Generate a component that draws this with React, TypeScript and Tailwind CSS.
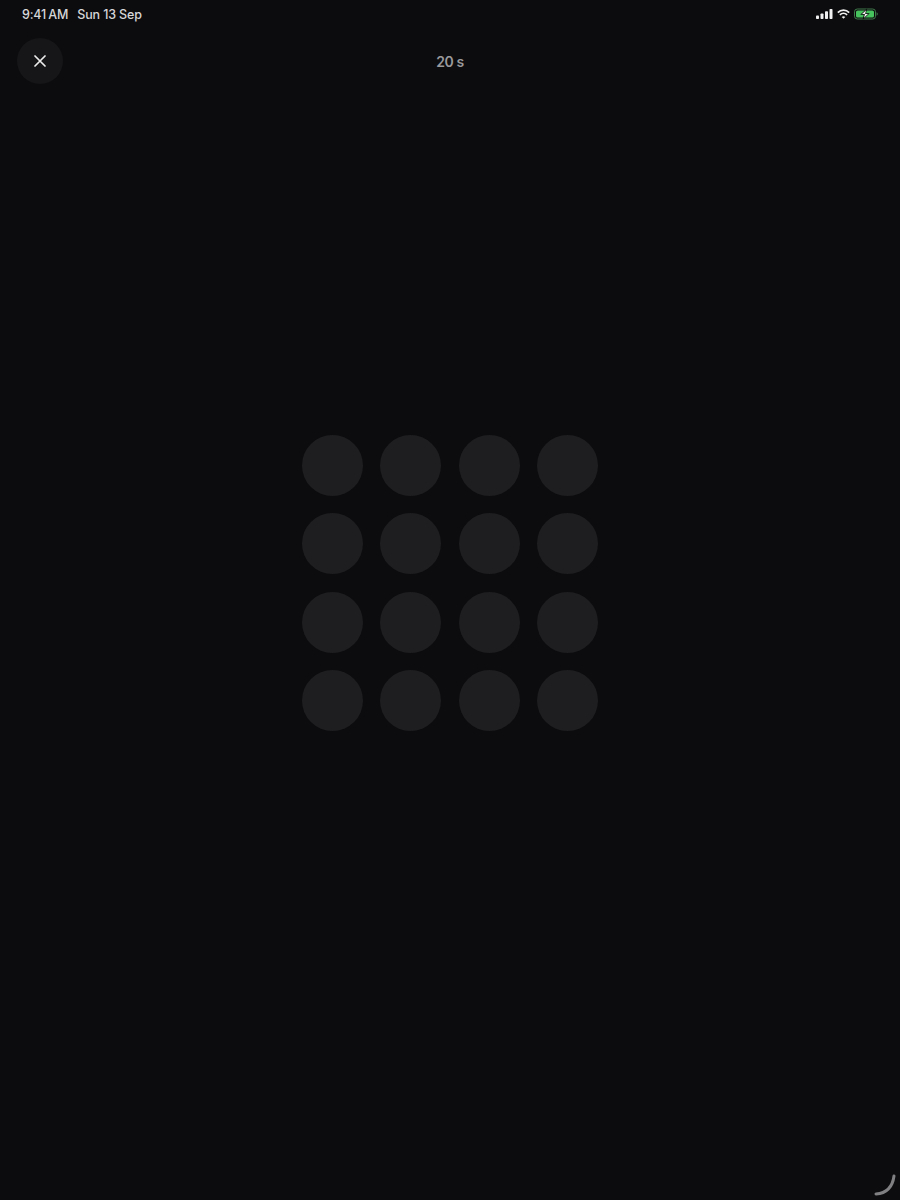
import React from "react";

const dots = Array.from({ length: 16 }, (_, i) => i);

export default function App() {
  return (
    <div className="relative flex h-[1200px] w-[900px] flex-col overflow-hidden bg-[#0c0c0e] font-['Inter','Liberation_Sans',sans-serif]">
      <div className="flex h-[30px] items-center justify-between pl-[22px] pr-[22px] text-[12.5px] font-medium tracking-[-0.15px] text-[#d6d6d8]">
        <div className="flex gap-[9px]">
          <span className="[word-spacing:-1px]">9:41 AM</span>
          <span>Sun 13 Sep</span>
        </div>
        <div className="mb-[2px] flex items-center gap-[4px]">
          <svg width="17" height="10" viewBox="0 0 17 10" fill="#f0f0f0">
            <rect x="0" y="6.5" width="3" height="3.5" rx="0.8" />
            <rect x="4.5" y="4.5" width="3" height="5.5" rx="0.8" />
            <rect x="9" y="2.2" width="3" height="7.8" rx="0.8" />
            <rect x="13.5" y="0" width="3" height="10" rx="0.8" />
          </svg>
          <svg width="13" height="10" viewBox="0 0 13 10" fill="none" stroke="#f0f0f0" strokeWidth="1.7">
            <path d="M0.8 3.6 C4 0.4 9 0.4 12.2 3.6" />
            <path d="M2.9 5.8 C4.9 3.9 8.1 3.9 10.1 5.8" />
            <path d="M6.5 9.8 L4.7 7.9 C5.7 7 7.3 7 8.3 7.9 Z" fill="#f0f0f0" stroke="none" />
          </svg>
          <svg width="24" height="12" viewBox="0 0 24 12" fill="none">
            <rect x="0.5" y="1" width="21" height="10" rx="2.8" stroke="#3f7a4a" />
            <rect x="2" y="2.5" width="18" height="7" rx="1.6" fill="#46c35c" />
            <path d="M22.6 4.3 C23.4 4.6 23.8 5.2 23.8 6 C23.8 6.8 23.4 7.4 22.6 7.7 Z" fill="#3f7a4a" />
            <path d="M13.2 0.2 L6.2 6.8 H9.8 L8.6 11.8 L15.8 5.2 H12 Z" fill="#0c0c0e" />
            <path d="M12 2.2 L8 6 H10.9 L10 9.8 L14 6 H11.2 Z" fill="#f0f5f0" />
          </svg>
        </div>
      </div>

      <div className="mt-[8px] grid h-[46px] grid-cols-3 items-center px-[17px]">
        <button className="flex h-[46px] w-[46px] items-center justify-center rounded-full bg-[#161618]">
          <svg width="12" height="12" viewBox="0 0 12 12" fill="none" stroke="#ececec" strokeWidth="1.7" strokeLinecap="round">
            <path d="M1 1 L11 11 M11 1 L1 11" />
          </svg>
        </button>
        <div className="text-center text-[14px] font-semibold tracking-[-0.4px] text-[#9a9a9c]">20 s</div>
        <div />
      </div>

      <div className="flex flex-1 justify-center pt-[351px]">
        <div className="grid h-[296px] w-[296px] grid-cols-[repeat(4,61px)] content-between justify-between">
          {dots.map((d) => (
            <div key={d} className="h-[61px] w-[61px] rounded-full bg-[#1e1e21]" />
          ))}
        </div>
      </div>

      <svg className="absolute bottom-[3px] right-[3px]" width="24" height="24" viewBox="0 0 24 24" fill="none">
        <path d="M3 21 C10 20.5 19 18 21 3" stroke="#808083" strokeWidth="3" strokeLinecap="round" />
      </svg>
    </div>
  );
}
